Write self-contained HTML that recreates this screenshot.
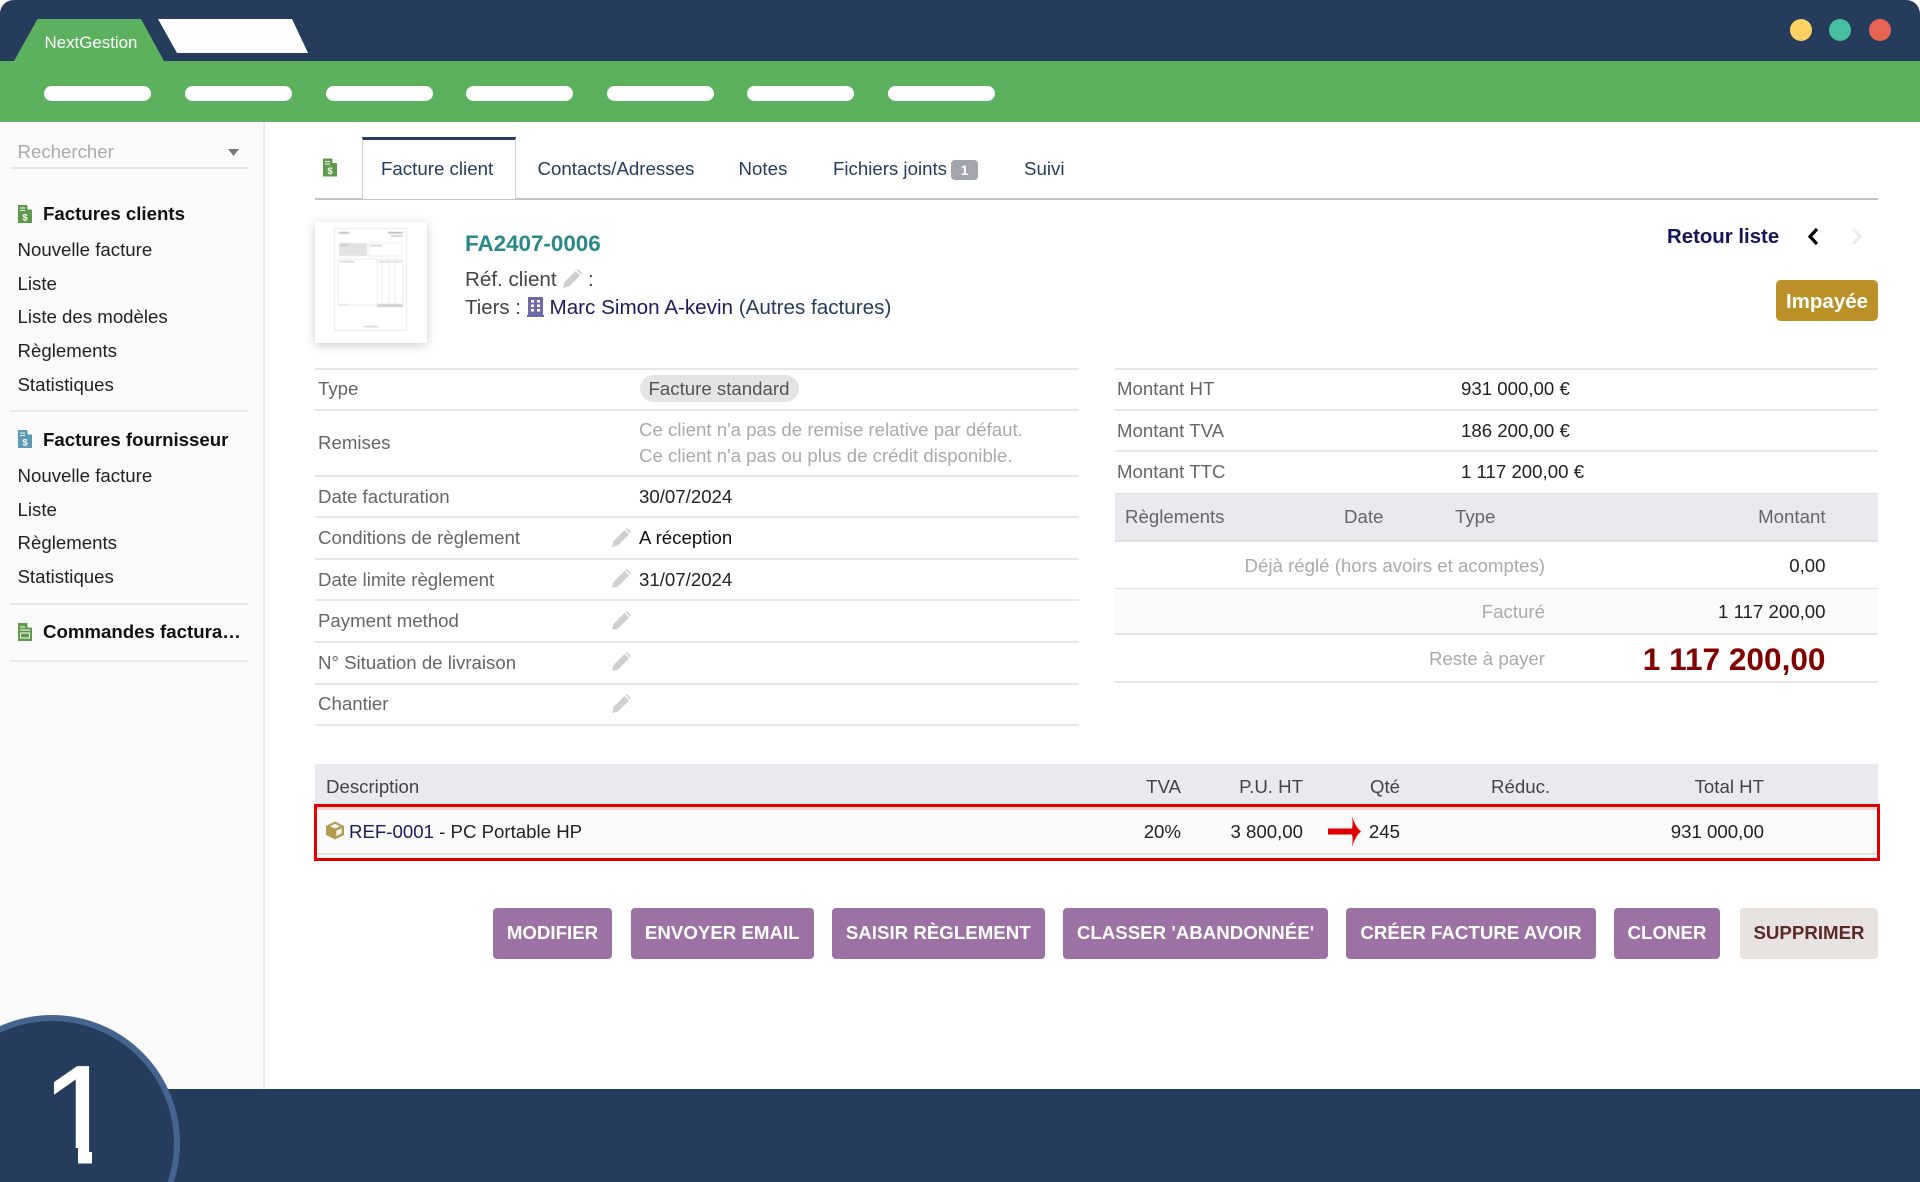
<!DOCTYPE html>
<html lang="fr"><head><meta charset="utf-8"><title>NextGestion</title>
<style>
html,body{margin:0;padding:0;background:#263c5c;width:1920px;height:1182px;overflow:hidden}
#p{position:relative;width:1920px;height:1182px;overflow:hidden;font-family:"Liberation Sans",sans-serif;font-size:18.65px;color:#222}
#p *{box-sizing:border-box}
.a{position:absolute}
.t{position:absolute;line-height:30px;height:30px;white-space:nowrap}
.r{transform:translateX(-100%)}
.l{position:absolute;height:2px;background:#e6e6e6}
.g{color:#666}.h{color:#aaa}.b{font-weight:700}.n{color:#263c5c}
.sb{font-size:18.65px;color:#111}
.pill{position:absolute;top:86px;height:15px;width:107px;border-radius:8px;background:#fff}
.btn{position:absolute;top:908px;height:51px;background:#9c72a4;border-radius:4px;color:#fff;font-weight:700;font-size:18.7px;line-height:50px;text-align:center;white-space:nowrap}
svg{position:absolute;display:block}
</style></head><body>
<div id="p">
<div class="a" style="left:0;top:122px;width:1920px;height:967px;background:#fff"></div>
<div class="a" style="left:0;top:122px;width:265px;height:967px;background:#fafafa;border-right:2px solid #ececec"></div>
<div class="a" style="left:0;top:0;width:1920px;height:61px;background:#263c5c"></div>
<div class="a" style="left:0;top:61px;width:1920px;height:61px;background:#5cb15f"></div>
<svg style="left:0;top:0" width="340" height="62"><path d="M14 61L37.500 19H141L164 61Z" fill="#5cb15f"/><path d="M158 19H292L308 53H177Z" fill="#fff"/></svg>
<div class="t" style="left:44.500px;top:28px;color:#fff;font-size:16.900px">NextGestion</div>
<div class="pill" style="left:44px"></div><div class="pill" style="left:185px"></div><div class="pill" style="left:326px"></div><div class="pill" style="left:466px"></div><div class="pill" style="left:607px"></div><div class="pill" style="left:747px"></div><div class="pill" style="left:888px"></div>
<div class="a" style="left:1790px;top:19px;width:22px;height:22px;border-radius:50%;background:#fdd262"></div>
<div class="a" style="left:1829px;top:19px;width:22px;height:22px;border-radius:50%;background:#46c0a0"></div>
<div class="a" style="left:1869px;top:19px;width:22px;height:22px;border-radius:50%;background:#e76452"></div>

<!-- Sidebar -->
<div class="t h" style="left:17.500px;top:137px">Rechercher</div>
<svg style="left:228px;top:149px" width="11" height="7"><path d="M0 0H11L5.500 7Z" fill="#777"/></svg>
<div class="l" style="left:10px;top:167px;width:238px"></div>

<svg style="left:18px;top:205px" width="14" height="18" viewBox="0 0 14 18"><path d="M0 0H9L14 5V18H0Z" fill="#5f9a4a"/><path d="M9.500 0V4.500H14Z" fill="#fff"/><path d="M2 3H7M2 5.500H7" stroke="#fff" stroke-width="1"/><text x="7" y="15.500" font-size="9.500" font-weight="700" fill="#fff" text-anchor="middle" font-family="Liberation Sans">$</text></svg>
<div class="t b sb" style="left:43px;top:199px">Factures clients</div>
<div class="t" style="left:17.500px;top:235px">Nouvelle facture</div>
<div class="t" style="left:17.500px;top:269px">Liste</div>
<div class="t" style="left:17.500px;top:302px">Liste des modèles</div>
<div class="t" style="left:17.500px;top:336px">Règlements</div>
<div class="t" style="left:17.500px;top:370px">Statistiques</div>
<div class="l" style="left:10px;top:410px;width:238px"></div>

<svg style="left:18px;top:430px" width="14" height="18" viewBox="0 0 14 18"><path d="M0 0H9L14 5V18H0Z" fill="#5a9ab5"/><path d="M9.500 0V4.500H14Z" fill="#fff"/><path d="M2 3H7M2 5.500H7" stroke="#fff" stroke-width="1"/><text x="7" y="15.500" font-size="9.500" font-weight="700" fill="#fff" text-anchor="middle" font-family="Liberation Sans">$</text></svg>
<div class="t b sb" style="left:43px;top:425px">Factures fournisseur</div>
<div class="t" style="left:17.500px;top:461px">Nouvelle facture</div>
<div class="t" style="left:17.500px;top:495px">Liste</div>
<div class="t" style="left:17.500px;top:528px">Règlements</div>
<div class="t" style="left:17.500px;top:562px">Statistiques</div>
<div class="l" style="left:10px;top:602.500px;width:238px"></div>

<svg style="left:18px;top:623px" width="14" height="18" viewBox="0 0 14 18"><path d="M0 0H9L14 5V18H0Z" fill="#5f9a4a"/><path d="M9.500 0V4.500H14Z" fill="#fff"/><path d="M2 4H7M2 7H12" stroke="#fff" stroke-width="1"/><rect x="2.500" y="10" width="9" height="5" fill="none" stroke="#fff" stroke-width="1"/></svg>
<div class="t b sb" style="left:43px;top:617px">Commandes factura…</div>
<div class="l" style="left:10px;top:659.500px;width:238px"></div>

<!-- Tabs -->
<svg style="left:323px;top:158px" width="14" height="19" viewBox="0 0 14 18"><path d="M0 0H9L14 5V18H0Z" fill="#5f9a4a"/><path d="M9.500 0V4.500H14Z" fill="#fff"/><path d="M2 3H7M2 5.500H7" stroke="#fff" stroke-width="1"/><text x="7" y="15.500" font-size="9.500" font-weight="700" fill="#fff" text-anchor="middle" font-family="Liberation Sans">$</text></svg>
<div class="a" style="left:315px;top:197.500px;width:1563px;height:2px;background:#c4c4c4"></div>
<div class="a" style="left:362px;top:137px;width:153.500px;height:62px;background:#fff;border:1px solid #cfcfcf;border-top:3px solid #263c5c;border-bottom:none"></div>
<div class="t n" style="left:381px;top:154px;font-size:18.70px">Facture client</div>
<div class="t n" style="left:537.500px;top:154px;font-size:18.70px">Contacts/Adresses</div>
<div class="t n" style="left:738.500px;top:154px;font-size:18.70px">Notes</div>
<div class="t n" style="left:833px;top:154px;font-size:18.65px">Fichiers joints</div>
<div class="a b" style="left:951px;top:160px;width:27px;height:20px;border-radius:4px;background:#a3a5ad;color:#fff;font-size:14px;line-height:20px;text-align:center">1</div>
<div class="t n" style="left:1024px;top:154px;font-size:18.70px">Suivi</div>

<!-- Reference header -->
<div class="a" style="left:315px;top:222px;width:112px;height:121px;background:#fff;box-shadow:0 2px 10px rgba(0,0,0,.2)"></div>
<svg style="left:334px;top:228px;filter:blur(.5px)" width="73" height="103" viewBox="0 0 73 103" fill="none">
<rect x=".5" y=".5" width="72" height="102" stroke="#e6e6e6"/>
<rect x="5" y="4" width="10" height="1.500" fill="#b0b0ba"/><rect x="54" y="4" width="15" height="1.500" fill="#b0b0ba"/><rect x="57" y="7" width="12" height="2" fill="#d4d4de"/>
<rect x="5" y="15" width="28" height="13" fill="#e2e2e2"/><rect x="35" y="15" width="33" height="13" stroke="#ececec"/><rect x="36" y="17" width="12" height="1.200" fill="#c4c4c4"/><rect x="6" y="16.500" width="8" height="1.200" fill="#bdbdbd"/>
<rect x="4" y="31" width="65" height="46" stroke="#ececec"/><path d="M43 31V77M48 31V77M55 31V77M61 31V77" stroke="#ececec"/><rect x="5" y="33" width="15" height="1.200" fill="#c4c4c4"/><rect x="45" y="33" width="23" height="1.200" fill="#d0d0d0"/>
<rect x="5" y="76" width="10" height="1.200" fill="#dcdcdc"/><rect x="43" y="76" width="26" height="3" fill="#d0d0d0"/>
<rect x="30" y="98" width="14" height="1.200" fill="#c8c8c8"/>
</svg>
<div class="t b" style="left:465px;top:229px;color:#2a8888;font-size:22.400px">FA2407-0006</div>
<div class="t" style="left:465px;top:265px;font-size:20.600px;color:#444">Réf. client</div>
<svg style="left:562px;top:269px" width="20" height="20" viewBox="0 0 20 20"><path d="M1 19L2.500 13L13.500 2L18 6.500L7 17.500Z" fill="#cfcfcf"/><path d="M14.500 1L16 0L20 4L19 5.500Z" fill="#cfcfcf"/></svg>
<div class="t" style="left:588px;top:265px;font-size:20.600px;color:#444">:</div>
<div class="t" style="left:465px;top:293px;font-size:20.400px;color:#444">Tiers :</div>
<svg style="left:527px;top:297px" width="17" height="20" viewBox="0 0 17 20"><rect x="1" y="0" width="15" height="19" fill="#6c6cab"/><rect x="0" y="18" width="17" height="2" fill="#6c6cab"/><g fill="#fff"><rect x="4" y="3" width="3" height="2.500"/><rect x="10" y="3" width="3" height="2.500"/><rect x="4" y="7.500" width="3" height="2.500"/><rect x="10" y="7.500" width="3" height="2.500"/><rect x="4" y="12" width="3" height="2.500"/><rect x="10" y="12" width="3" height="2.500"/></g></svg>
<div class="t" style="left:549.500px;top:293px;font-size:20.650px;color:#1c1c5c">Marc Simon A-kevin <span style="color:#263c5c">(Autres factures)</span></div>

<div class="t b" style="left:1667px;top:222px;font-size:20.400px;color:#14145a">Retour liste</div>
<svg style="left:1806px;top:227px" width="14" height="19" viewBox="0 0 14 19"><path d="M11 2L4 9.500L11 17" fill="none" stroke="#000" stroke-width="3.200"/></svg>
<svg style="left:1850px;top:227px" width="14" height="19" viewBox="0 0 14 19"><path d="M3 2L10 9.500L3 17" fill="none" stroke="#ececec" stroke-width="3.200"/></svg>
<div class="a b" style="left:1776px;top:280px;width:102px;height:41px;border-radius:5px;background:#ba9027;color:#fff;font-size:20.500px;line-height:43px;text-align:center">Impayée</div>

<!-- Left table -->
<div class="l" style="left:315px;top:367.500px;width:764px"></div>
<div class="l" style="left:315px;top:409px;width:764px"></div>
<div class="l" style="left:315px;top:475px;width:764px"></div>
<div class="l" style="left:315px;top:516px;width:764px"></div>
<div class="l" style="left:315px;top:558px;width:764px"></div>
<div class="l" style="left:315px;top:599px;width:764px"></div>
<div class="l" style="left:315px;top:641px;width:764px"></div>
<div class="l" style="left:315px;top:683px;width:764px"></div>
<div class="l" style="left:315px;top:724px;width:764px"></div>
<div class="t g" style="left:318px;top:374px">Type</div>
<div class="a g" style="left:639.500px;top:375px;width:159px;height:27px;border-radius:14px;background:#e4e4e4;line-height:27px;text-align:center;color:#555">Facture standard</div>
<div class="t g" style="left:318px;top:428px">Remises</div>
<div class="t h" style="left:639px;top:415px">Ce client n'a pas de remise relative par défaut.</div>
<div class="t h" style="left:639px;top:441px">Ce client n'a pas ou plus de crédit disponible.</div>
<div class="t g" style="left:318px;top:482px">Date facturation</div>
<div class="t" style="left:639px;top:482px">30/07/2024</div>
<div class="t g" style="left:318px;top:523px">Conditions de règlement</div>
<div class="t" style="left:639px;top:523px;color:#111">A réception</div>
<div class="t g" style="left:318px;top:565px">Date limite règlement</div>
<div class="t" style="left:639px;top:565px">31/07/2024</div>
<div class="t g" style="left:318px;top:606px">Payment method</div>
<div class="t g" style="left:318px;top:648px">N° Situation de livraison</div>
<div class="t g" style="left:318px;top:689px">Chantier</div>
<svg style="left:611px;top:528px" width="20" height="20" viewBox="0 0 20 20"><path d="M1 19L2.500 13L13.500 2L18 6.500L7 17.500Z" fill="#cfcfcf"/><path d="M14.500 1L16 0L20 4L19 5.500Z" fill="#cfcfcf"/></svg>
<svg style="left:611px;top:569px" width="20" height="20" viewBox="0 0 20 20"><path d="M1 19L2.500 13L13.500 2L18 6.500L7 17.500Z" fill="#cfcfcf"/><path d="M14.500 1L16 0L20 4L19 5.500Z" fill="#cfcfcf"/></svg>
<svg style="left:611px;top:611px" width="20" height="20" viewBox="0 0 20 20"><path d="M1 19L2.500 13L13.500 2L18 6.500L7 17.500Z" fill="#cfcfcf"/><path d="M14.500 1L16 0L20 4L19 5.500Z" fill="#cfcfcf"/></svg>
<svg style="left:611px;top:652px" width="20" height="20" viewBox="0 0 20 20"><path d="M1 19L2.500 13L13.500 2L18 6.500L7 17.500Z" fill="#cfcfcf"/><path d="M14.500 1L16 0L20 4L19 5.500Z" fill="#cfcfcf"/></svg>
<svg style="left:611px;top:694px" width="20" height="20" viewBox="0 0 20 20"><path d="M1 19L2.500 13L13.500 2L18 6.500L7 17.500Z" fill="#cfcfcf"/><path d="M14.500 1L16 0L20 4L19 5.500Z" fill="#cfcfcf"/></svg>

<!-- Right table -->
<div class="l" style="left:1114.500px;top:367.500px;width:763.500px"></div>
<div class="l" style="left:1114.500px;top:409px;width:763.500px"></div>
<div class="l" style="left:1114.500px;top:450px;width:763.500px"></div>
<div class="a" style="left:1114.500px;top:493px;width:763.500px;height:49px;background:#e9eaee;border-bottom:2px solid #e0e0e0;border-top:1px solid #ddd"></div>
<div class="a" style="left:1114.500px;top:588px;width:763.500px;height:47px;background:#fafafa;border-top:1px solid #e4e4e4;border-bottom:2px solid #e4e4e4"></div>
<div class="l" style="left:1114.500px;top:680.500px;width:763.500px"></div>
<div class="t g" style="left:1117px;top:374px">Montant HT</div>
<div class="t" style="left:1461px;top:374px">931 000,00 €</div>
<div class="t g" style="left:1117px;top:416px">Montant TVA</div>
<div class="t" style="left:1461px;top:416px">186 200,00 €</div>
<div class="t g" style="left:1117px;top:457px">Montant TTC</div>
<div class="t" style="left:1461px;top:457px">1 117 200,00 €</div>
<div class="t g" style="left:1125px;top:502px">Règlements</div>
<div class="t g" style="left:1344px;top:502px">Date</div>
<div class="t g" style="left:1455px;top:502px">Type</div>
<div class="t g r" style="left:1825.500px;top:502px">Montant</div>
<div class="t h r" style="left:1545px;top:551px">Déjà réglé (hors avoirs et acomptes)</div>
<div class="t r" style="left:1825.500px;top:551px">0,00</div>
<div class="t h r" style="left:1545px;top:597px">Facturé</div>
<div class="t r" style="left:1825.500px;top:597px">1 117 200,00</div>
<div class="t h r" style="left:1545px;top:644px">Reste à payer</div>
<div class="t b r" style="left:1825.500px;top:644px;font-size:31.600px;color:#800000">1 117 200,00</div>

<!-- Lines -->
<div class="a" style="left:315px;top:764px;width:1563px;height:41px;background:#e9eaee"></div>
<div class="a" style="left:313.500px;top:804px;width:1566.500px;height:57px;background:#fafafa;border:3px solid #e00000"></div>
<div class="a" style="left:316.500px;top:807px;width:1560.500px;height:3px;background:#f2d8d8"></div>
<div class="a" style="left:316.500px;top:853px;width:1560.500px;height:2px;background:#e2e2e2"></div>
<div class="t" style="left:326px;top:772px;color:#444">Description</div>
<div class="t r" style="left:1181px;top:772px;color:#444">TVA</div>
<div class="t r" style="left:1303px;top:772px;color:#444">P.U. HT</div>
<div class="t r" style="left:1400px;top:772px;color:#444">Qté</div>
<div class="t" style="left:1491px;top:772px;color:#444">Réduc.</div>
<div class="t r" style="left:1764px;top:772px;color:#444">Total HT</div>
<svg style="left:324.500px;top:821px" width="20" height="19" viewBox="0 0 19 19"><path d="M9.500 .5L18.500 5V14L9.500 18.500L.5 14V5Z" fill="#b19c4f"/><path d="M4.500 5.200L9.500 7.500L14.500 5.200L9.500 3Z" fill="#fff"/><path d="M10.800 9.800L16 7.400V12.400L10.800 15Z" fill="#fafafa"/></svg>
<div class="t" style="left:349px;top:817px"><span style="color:#1c1c5c">REF-0001</span> - PC Portable HP</div>
<div class="t r" style="left:1181px;top:817px">20%</div>
<div class="t r" style="left:1303px;top:817px">3 800,00</div>
<svg style="left:1328px;top:816px" width="33" height="31" viewBox="0 0 33 31"><path d="M0 12.500H24C25 8 24.500 4 24 0C26 7 29 12 33 15.500C29 19 26 24 24 31C24.500 27 25 23 24 18.500H0Z" fill="#e00000"/></svg>
<div class="t r" style="left:1400px;top:817px">245</div>
<div class="t r" style="left:1764px;top:817px">931 000,00</div>

<!-- Buttons -->
<div class="btn" style="left:493px;width:119px">MODIFIER</div>
<div class="btn" style="left:631px;width:182.500px">ENVOYER EMAIL</div>
<div class="btn" style="left:832px;width:212.500px">SAISIR RÈGLEMENT</div>
<div class="btn" style="left:1063px;width:265px">CLASSER 'ABANDONNÉE'</div>
<div class="btn" style="left:1346px;width:250px">CRÉER FACTURE AVOIR</div>
<div class="btn" style="left:1614px;width:106px">CLONER</div>
<div class="btn" style="left:1740px;width:138px;background:#e8e3e0;color:#5a2a2a">SUPPRIMER</div>

<!-- Footer -->
<div class="a" style="left:0;top:1089px;width:1920px;height:93px;background:#263c5c"></div>
<svg style="left:0;top:1010px" width="190" height="172" viewBox="0 0 190 172"><circle cx="52" cy="133" r="125" fill="#263c5c" stroke="#456590" stroke-width="6"/></svg>
<div class="a" style="left:41px;top:1045px;width:80px;height:137px;font-size:140px;line-height:140px;color:#fff;-webkit-text-stroke:1px #fff;overflow:hidden;clip-path:polygon(0 0,80px 0,80px 103px,51px 103px,51px 137px,37px 137px,37px 103px,0 103px)">1</div>

<!-- Rounded outer corners -->
<svg style="left:0;top:0" width="14" height="14"><path d="M0 0H14C6 0 0 6 0 14Z" fill="#fff"/></svg>
<svg style="left:1906px;top:0" width="14" height="14"><path d="M14 0H0C8 0 14 6 14 14Z" fill="#fff"/></svg>
</div>
</body></html>
